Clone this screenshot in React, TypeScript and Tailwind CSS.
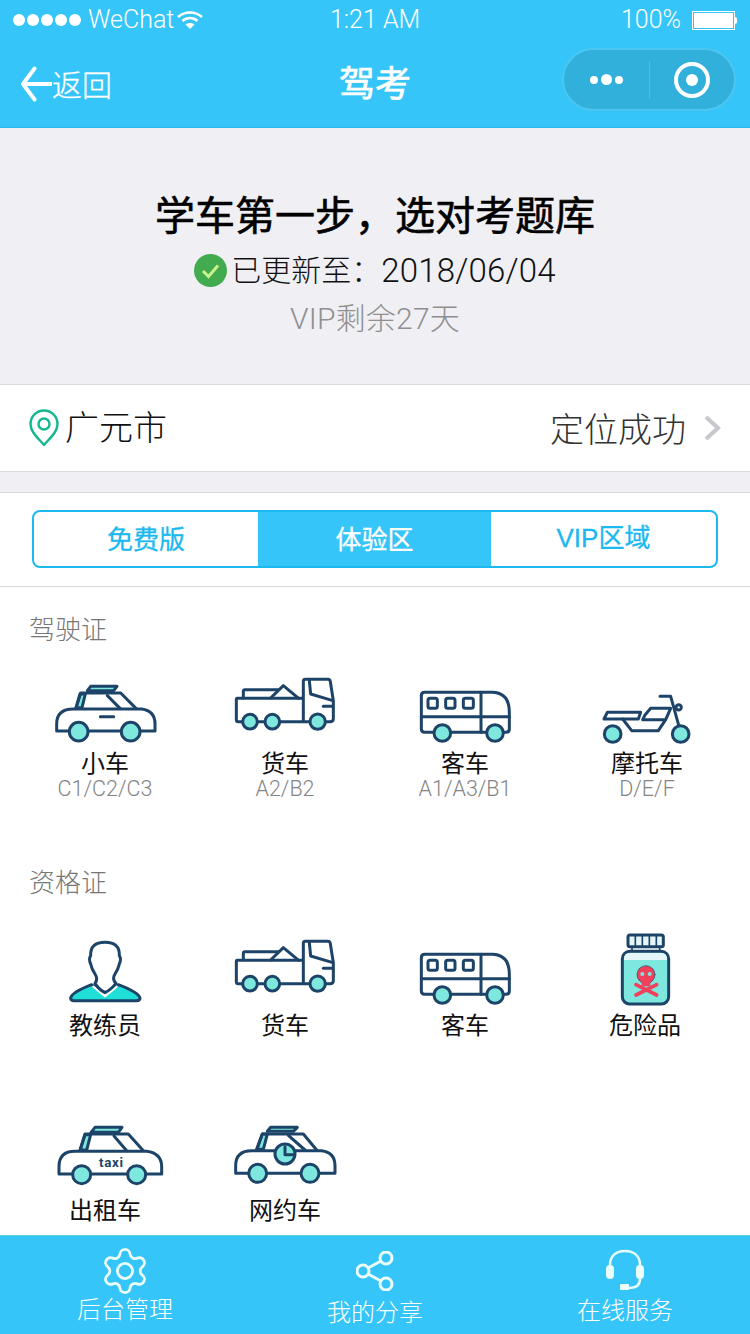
import React from "react";

const S = "#1d4468";
const T = "#7fe8de";
const latin = 'Roboto, "Noto Sans CJK SC", sans-serif';
const sans = '"Liberation Sans", "Noto Sans CJK SC", sans-serif';
const cjk = '"Noto Sans CJK SC", "Liberation Sans", sans-serif';

function Icon({ vb, children }: { vb: string; children: React.ReactNode }) {
  return (
    <svg width={120} height={80} viewBox={vb} fill="none" stroke={S} strokeWidth={9} strokeLinecap="round" strokeLinejoin="round" className="block shrink-0">
      {children}
    </svg>
  );
}

function Wheel({ x, y, r }: { x: number; y: number; r: number }) {
  return <circle cx={x} cy={y} r={r} fill={T} />;
}

function CarIcon({ vb }: { vb: string }) {
  return (
    <Icon vb={vb}>
      <path d="M150 75L166 75L156 116L138 116Z" fill={T} />
      <path d="M138 118L152 72L272 72L318 118" />
      <path d="M232 80L270 118" />
      <path d="M172 65L182 52L261 52L251 65Z" fill={T} />
      <path d="M80 186L80 165Q80 120 130 120L335 120Q375 125 375 165L375 186Z" fill="#fff" />
      <path d="M211 143L251 143" />
      <Wheel x={146} y={188} r={28} />
      <Wheel x={302} y={188} r={28} />
    </Icon>
  );
}

function TruckIcon({ vb }: { vb: string }) {
  return (
    <Icon vb={vb}>
      <path d="M640 86L640 67Q640 62 645 62L748 62" />
      <path d="M722 87L760 50L806 88" fill="#fff" />
      <path d="M820 88L622 88Q619 88 619 92L619 152Q619 158 625 158L900 158Q910 158 910 150L910 95L901 38Q900 31 894 31L826 31Q820 31 820 37L820 158" />
      <path d="M838 35L842 75L906 94" />
      <path d="M880 112L908 112" />
      <Wheel x={660} y={158} r={22} />
      <Wheel x={727} y={158} r={22} />
      <Wheel x={863} y={158} r={23} />
    </Icon>
  );
}

function BusIcon({ vb }: { vb: string }) {
  return (
    <Icon vb={vb}>
      <path d="M64 80Q64 70 74 70L278 70Q328 72 328 130L328 180Q328 190 318 190L74 190Q64 190 64 180Z" fill="#fff" />
      <path d="M64 143L328 143M243 70L243 190" />
      <rect x={84} y={88} width={28} height={30} rx={6} />
      <rect x={137} y={88} width={28} height={30} rx={6} />
      <rect x={190} y={88} width={30} height={30} rx={6} />
      <Wheel x={127} y={192} r={25} />
      <Wheel x={285} y={192} r={25} />
    </Icon>
  );
}

function MotoIcon({ vb }: { vb: string }) {
  return (
    <Icon vb={vb}>
      <path d="M780 82L812 82L842 190" />
      <circle cx={836} cy={115} r={8} />
      <path d="M612 150L622 130L722 130L715 150L612 150" />
      <path d="M668 150L695 185L775 185L797 152L728 152L735 138L752 118L812 118L797 152" />
      <Wheel x={638} y={195} r={25} />
      <Wheel x={842} y={195} r={25} />
    </Icon>
  );
}

function PersonIcon({ vb }: { vb: string }) {
  return (
    <Icon vb={vb}>
      <path d="M122 222Q125 205 185 182L225 212L265 182Q325 205 330 222Q330 230 320 230L132 230Q122 230 122 222Z" fill="#1fe0d8" />
      <path d="M190 188L225 216L260 188" stroke="#fff" strokeWidth={7} />
      <path d="M195 178Q205 165 195 150Q185 135 182 120Q175 105 182 95Q180 55 225 55Q270 55 268 95Q275 105 268 120Q265 135 255 150Q245 165 258 178Q240 200 225 205Q210 200 195 178Z" fill="#fff" />
    </Icon>
  );
}

function BottleIcon({ vb }: { vb: string }) {
  return (
    <Icon vb={vb}>
      <rect x={684} y={33} width={106} height={35} rx={6} fill="#e4f6f8" />
      <path d="M706 35V66M727 35V66M748 35V66M769 35V66" strokeWidth={5} />
      <path d="M696 70V82M779 70V82" strokeWidth={5} />
      <rect x={667} y={82} width={139} height={158} rx={22} fill={T} />
      <path d="M672 108V104Q672 87 690 87L783 87Q801 87 801 104V108Z" fill="#e4f6f8" stroke="none" />
      <path d="M708 182L770 213M770 182L708 213" stroke="#f0405c" strokeWidth={11} />
      <circle cx={738} cy={152} r={27} fill="#f0405c" strokeWidth={2} />
      <rect x={725} y={170} width={26} height={17} rx={3} fill="#f0405c" stroke="none" />
      <circle cx={727} cy={150} r={6} fill={T} stroke="none" />
      <circle cx={749} cy={150} r={6} fill={T} stroke="none" />
    </Icon>
  );
}

function TaxiIcon({ vb }: { vb: string }) {
  return (
    <Icon vb={vb}>
      <path d="M165 62L182 62L170 108L150 108Z" fill={T} />
      <path d="M150 110L165 60L295 60L340 110" />
      <path d="M252 66L290 110" />
      <path d="M183 55L195 40L276 40L265 55Z" fill={T} />
      <path d="M87 180L87 158Q87 112 135 112L350 112Q395 118 395 158L395 180Z" fill="#fff" />
      <text x={244} y={159} textAnchor="middle" fill={S} stroke="none" fontSize={40} fontWeight={700} fontFamily="Roboto, sans-serif" letterSpacing={2}>taxi</text>
      <Wheel x={155} y={182} r={27} />
      <Wheel x={320} y={182} r={27} />
    </Icon>
  );
}

function NetCarIcon({ vb }: { vb: string }) {
  return (
    <Icon vb={vb}>
      <path d="M697 60L712 60L700 106L680 106Z" fill={T} />
      <path d="M680 108L697 60L820 60L860 108" />
      <path d="M775 64L825 108" />
      <path d="M712 52L722 40L802 40L790 52Z" fill={T} />
      <path d="M617 178L617 155Q617 110 665 110L875 110Q915 115 915 155L915 178Z" fill="#fff" />
      <circle cx={765} cy={120} r={30} fill={T} />
      <path d="M765 98L765 122L790 122" />
      <Wheel x={683} y={178} r={27} />
      <Wheel x={840} y={178} r={27} />
    </Icon>
  );
}

function Tile({ icon, label, sub, textClass }: { icon: React.ReactNode; label: string; sub?: string; textClass?: string }) {
  return (
    <div className="flex flex-col items-center">
      {icon}
      <div className={`text-[24px] leading-[26px] text-[#111] pb-[2px] ${textClass ?? ""}`}>{label}</div>
      {sub && <div className={`text-[21.5px] leading-[22px] pt-[1px] text-[#848484] font-light ${textClass ?? ""}`} style={{ fontFamily: latin }}>{sub}</div>}
    </div>
  );
}

export default function App() {
  return (
    <div className="w-[750px] h-[1334px] flex flex-col bg-white overflow-hidden" style={{ fontFamily: cjk }}>
      <div className="h-[128px] shrink-0 bg-[#36c5f8] border-b border-[#2bb8ea] text-white">
        <div className="h-[40px] flex items-center px-[13px] relative">
          <div className="flex gap-[2px]">
            {[0, 1, 2, 3, 4].map((i) => (
              <span key={i} className="block w-[12px] h-[12px] rounded-full bg-white" />
            ))}
          </div>
          <span className="ml-[7px] text-[25px] font-light" style={{ fontFamily: latin }}>WeChat</span>
          <svg width="28" height="20" viewBox="0 0 28 20" className="ml-[2px]" fill="none" stroke="#fff" strokeWidth="2.6">
            <path d="M2 7C9 1 19 1 26 7" />
            <path d="M6.5 11C11 7 17 7 21.5 11" />
            <path d="M14 19L9.5 14.5C12 12.5 16 12.5 18.5 14.5Z" fill="#fff" stroke="none" />
          </svg>
          <span className="absolute left-[330px] text-[25px] font-light" style={{ fontFamily: latin }}>1:21 AM</span>
          <span className="absolute left-[621px] text-[25px] font-light" style={{ fontFamily: latin }}>100%</span>
          <div className="absolute left-[692px] w-[43px] h-[19px] border border-white p-[1px]">
            <div className="w-full h-full bg-white" />
          </div>
          <div className="absolute left-[735px] w-[2px] h-[7px] bg-white rounded-r" />
        </div>
        <div className="h-[87px] flex items-center px-[14px]">
          <div className="flex-1 flex items-center pl-[7px]">
            <svg width="31" height="36" viewBox="0 0 32 36" fill="none" stroke="#fff" strokeWidth="4" strokeLinecap="round" strokeLinejoin="round">
              <path d="M14 2L2 18L14 34M2 18H32" />
            </svg>
            <span className="text-[30px] font-light [-webkit-text-stroke:0.3px_#fff]">返回</span>
          </div>
          <div className="text-[36px] font-normal leading-none mt-[-5px] ml-[-7px] [-webkit-text-stroke:0.7px_#fff]">驾考</div>
          <div className="flex-1 flex justify-end">
            <div className="w-[174px] h-[63px] mt-[-8px] rounded-full bg-[#31b0dc] border-2 border-[#4cc6f0] flex items-center">
              <div className="w-[85px] flex items-center justify-center gap-[3px]">
                <span className="block w-[8px] h-[8px] rounded-full bg-white" />
                <span className="block w-[11px] h-[11px] rounded-full bg-white" />
                <span className="block w-[8px] h-[8px] rounded-full bg-white" />
              </div>
              <div className="w-px h-[38px] bg-[#4cc0e8]" />
              <div className="flex-1 flex items-center justify-center">
                <div className="w-[36px] h-[36px] rounded-full border-[4px] border-white flex items-center justify-center">
                  <span className="block w-[12px] h-[12px] rounded-full bg-white" />
                </div>
              </div>
            </div>
          </div>
        </div>
      </div>

      <div className="h-[257px] shrink-0 bg-[#efeff4] border-b border-[#d9d9d9] flex flex-col items-center pt-[57px]">
        <div className="text-[40px] leading-[56px] font-normal text-black [-webkit-text-stroke:0.6px_#000]">学车第一步，选对考题库</div>
        <div className="mt-[6px] h-[44px] flex items-center text-[30px] text-[#111] font-light">
          <svg width="33" height="33" viewBox="0 0 33 33" className="mr-[4px] mt-[2px]">
            <circle cx="16.5" cy="16.5" r="16.5" fill="#43ab4f" />
            <path d="M9 17L14.5 22.5L24 11.5" fill="none" stroke="#c8f58a" strokeWidth="3" />
          </svg>
          <span className="mt-[-2px]">已更新至：</span>
          <span className="text-[33px] tracking-[0.2px] mt-[4px]" style={{ fontFamily: latin }}>2018/06/04</span>
        </div>
        <div className="mt-[8px] text-[30px] leading-[40px] text-[#909090] font-light tracking-[0.2px]" style={{ fontFamily: latin }}>VIP剩余27天</div>
      </div>

      <div className="h-[87px] shrink-0 bg-white border-b border-[#d9d9d9] flex items-center pl-[29px] pr-[29px]">
        <svg width="30" height="38" viewBox="0 0 30 38" fill="none" stroke="#14b890" strokeWidth="2.4" className="mr-[6px]">
          <path d="M15 36C9 29 1.5 23 1.5 15A13.5 13.5 0 0 1 28.500 15C28.500 23 21 29 15 36Z" strokeLinejoin="round" />
          <circle cx="15" cy="15" r="5.500" />
        </svg>
        <span className="text-[34px] font-light text-[#111] mt-[-6px]">广元市</span>
        <span className="ml-auto text-[34px] font-light text-[#333] mt-[-2px] mr-[-1px]">定位成功</span>
        <svg width="18" height="26" viewBox="0 0 18 26" fill="none" stroke="#c7c7cc" strokeWidth="4" className="ml-[18px]">
          <path d="M3 2L15 13L3 24" />
        </svg>
      </div>

      <div className="h-[21px] shrink-0 bg-[#efeff4] border-b border-[#d9d9d9]" />

      <div className="h-[94px] shrink-0 border-b border-[#d9d9d9] pt-[17px] px-[32px]">
        <div className="h-[58px] flex border-2 border-[#1cb8f0] rounded-[8px] overflow-hidden text-[26px] text-[#1cb8f0]">
          <div className="w-[224px] flex items-center justify-center pb-[4px] [-webkit-text-stroke:0.3px_#1cb8f0]">免费版</div>
          <div className="w-[233px] flex items-center justify-center pb-[4px] bg-[#36c5f8] text-white [-webkit-text-stroke:0.3px_#fff]">体验区</div>
          <div className="flex-1 flex items-center justify-center pb-[2px] [-webkit-text-stroke:0.3px_#1cb8f0]" style={{ fontFamily: sans }}>VIP区域</div>
        </div>
      </div>

      <div className="flex-1 overflow-hidden pt-[23px]">
        <div className="pl-[29px] text-[26px] leading-[36px] text-[#777] font-light">驾驶证</div>
        <div className="mt-[23px] px-[15px] grid grid-cols-4">
          <Tile icon={<CarIcon vb="45 0 360 240" />} label="小车" sub="C1/C2/C3" />
          <Tile icon={<TruckIcon vb="585 0 360 240" />} label="货车" sub="A2/B2" />
          <Tile icon={<BusIcon vb="15 0 360 240" />} label="客车" sub="A1/A3/B1" />
          <Tile icon={<MotoIcon vb="555 0 360 240" />} label="摩托车" sub="D/E/F" textClass="ml-[4px]" />
        </div>
        <div className="mt-[63px] pl-[29px] text-[26px] leading-[36px] text-[#777] font-light">资格证</div>
        <div className="mt-[32px] px-[15px] grid grid-cols-4 gap-y-[77px]">
          <Tile icon={<PersonIcon vb="45 21 360 240" />} label="教练员" />
          <Tile icon={<TruckIcon vb="585 0 360 240" />} label="货车" />
          <Tile icon={<BusIcon vb="15 0 360 240" />} label="客车" />
          <Tile icon={<BottleIcon vb="555 21 360 240" />} label="危险品" />
          <Tile icon={<TaxiIcon vb="45 6 360 240" />} label="出租车" />
          <Tile icon={<NetCarIcon vb="585 6 360 240" />} label="网约车" />
        </div>
      </div>

      <div className="h-[99px] shrink-0 bg-[#36c5f8] border-t border-[#4fd6d8] grid grid-cols-3 text-white text-[24px] font-light">
        <div className="flex flex-col items-center pt-[9px]">
          <svg width="52" height="52" viewBox="0 0 24 24" fill="none" stroke="#eafdfb" strokeWidth="1.300" strokeLinejoin="round">
            <path d="M9.671 4.136a2.34 2.34 0 0 1 4.659 0 2.34 2.34 0 0 0 3.319 1.915 2.34 2.34 0 0 1 2.33 4.033 2.34 2.34 0 0 0 0 3.831 2.34 2.34 0 0 1-2.33 4.033 2.34 2.34 0 0 0-3.319 1.915 2.34 2.34 0 0 1-4.659 0 2.34 2.34 0 0 0-3.32-1.915 2.34 2.34 0 0 1-2.33-4.033 2.34 2.34 0 0 0 0-3.831A2.34 2.34 0 0 1 6.35 6.051a2.34 2.34 0 0 0 3.32-1.915" />
            <circle cx="12" cy="12" r="3.500" />
          </svg>
          <span className="leading-[30px] mt-[-4px]">后台管理</span>
        </div>
        <div className="flex flex-col items-center pt-[15px]">
          <svg width="38" height="40" viewBox="0 0 38 40" fill="none" stroke="#eafdfb" strokeWidth="3">
            <circle cx="30" cy="7" r="6" />
            <circle cx="7" cy="20" r="6" />
            <circle cx="30" cy="33" r="6" />
            <path d="M12 17L25 10M12 23L25 30" />
          </svg>
          <span className="leading-[30px] mt-[5px]">我的分享</span>
        </div>
        <div className="flex flex-col items-center pt-[13px]">
          <svg width="40" height="42" viewBox="0 0 40 42" fill="none" stroke="#eafdfb" strokeWidth="2.500">
            <path d="M5 19V16C5 7 11 2 20 2C29 2 35 7 35 16V19" />
            <rect x="1" y="16" width="8" height="14" rx="4" fill="#eafdfb" stroke="none" />
            <rect x="31" y="16" width="8" height="14" rx="4" fill="#eafdfb" stroke="none" />
            <path d="M35 30C35 36 31 39 24 39" />
            <rect x="15" y="35" width="9" height="6" rx="1" fill="#eafdfb" stroke="none" />
          </svg>
          <span className="leading-[30px] mt-[3px]">在线服务</span>
        </div>
      </div>
    </div>
  );
}
